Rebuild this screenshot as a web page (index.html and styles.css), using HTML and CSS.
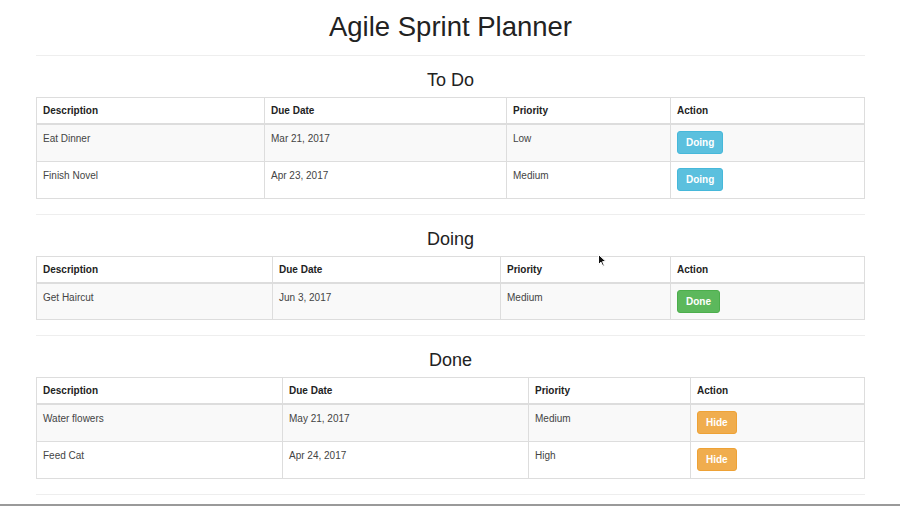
FILE: index.html
```html
<!DOCTYPE html>
<html lang="en">
<head>
<meta charset="utf-8">
<title>Agile Sprint Planner</title>
<link rel="stylesheet" href="styles.css">
</head>
<body>
<div class="page">
  <main class="container">
    <h1 class="title">Agile Sprint Planner</h1>
    <hr class="rule">

    <section class="board">
      <h3 class="board-title">To Do</h3>
      <table class="tasks">
        <colgroup><col class="todo-c1"><col class="todo-c2"><col class="todo-c3"><col></colgroup>
        <thead>
          <tr><th>Description</th><th>Due Date</th><th>Priority</th><th>Action</th></tr>
        </thead>
        <tbody>
          <tr><td>Eat Dinner</td><td>Mar 21, 2017</td><td>Low</td><td><button class="btn btn-info">Doing</button></td></tr>
          <tr><td>Finish Novel</td><td>Apr 23, 2017</td><td>Medium</td><td><button class="btn btn-info">Doing</button></td></tr>
        </tbody>
      </table>
      <hr class="rule rule-section">
    </section>

    <section class="board">
      <h3 class="board-title">Doing</h3>
      <table class="tasks">
        <colgroup><col class="doing-c1"><col class="doing-c2"><col class="doing-c3"><col></colgroup>
        <thead>
          <tr><th>Description</th><th>Due Date</th><th>Priority</th><th>Action</th></tr>
        </thead>
        <tbody>
          <tr><td>Get Haircut</td><td>Jun 3, 2017</td><td>Medium</td><td><button class="btn btn-success">Done</button></td></tr>
        </tbody>
      </table>
      <hr class="rule rule-section">
    </section>

    <section class="board">
      <h3 class="board-title">Done</h3>
      <table class="tasks">
        <colgroup><col class="done-c1"><col class="done-c2"><col class="done-c3"><col></colgroup>
        <thead>
          <tr><th>Description</th><th>Due Date</th><th>Priority</th><th>Action</th></tr>
        </thead>
        <tbody>
          <tr><td>Water flowers</td><td>May 21, 2017</td><td>Medium</td><td><button class="btn btn-warning">Hide</button></td></tr>
          <tr><td>Feed Cat</td><td>Apr 24, 2017</td><td>High</td><td><button class="btn btn-warning">Hide</button></td></tr>
        </tbody>
      </table>
      <hr class="rule rule-section">
    </section>
  </main>
  <div class="window-edge"></div>
</div>
<svg class="cursor" width="9" height="13" viewBox="0 0 9 13" aria-hidden="true">
  <path d="M0.5 0.5 L0.5 10.5 L3 8.2 L4.8 12.2 L6.3 11.5 L4.6 7.6 L8 7.6 Z" fill="#111" stroke="#fff" stroke-width="1"/>
</svg>
</body>
</html>
```
FILE: styles.css
```css
* { box-sizing: border-box; }

html, body {
  margin: 0;
  padding: 0;
  background: #fff;
}

body {
  font-family: "Liberation Sans", Arial, Helvetica, sans-serif;
  color: #333;
  font-size: 10px;
  position: relative;
  overflow: hidden;
}

.page {
  min-height: 506px;
  display: flex;
  flex-direction: column;
}

.container {
  padding: 0 35px 0 36px;
  flex: 1;
}

.title {
  margin: 10px 0 11px;
  font-size: 27.5px;
  line-height: 34px;
  font-weight: normal;
  text-align: center;
  color: #222;
}

.rule {
  margin: 0;
  border: 0;
  border-top: 1px solid #eee;
  height: 0;
}

.rule-section {
  margin-top: 15px;
}

.board-title {
  margin: 14px 0 7px;
  font-size: 18px;
  line-height: 20px;
  font-weight: normal;
  text-align: center;
  color: #222;
}

.tasks {
  width: 100%;
  border-collapse: collapse;
  table-layout: fixed;
  border: 1px solid #ddd;
}

.tasks th,
.tasks td {
  border: 1px solid #ddd;
  text-align: left;
  vertical-align: top;
  padding: 6px;
  font-size: 10px;
}

.tasks th {
  font-weight: bold;
  color: #222;
  line-height: 13px;
  padding-top: 6px;
  padding-bottom: 6px;
  border-bottom: 2px solid #ddd;
}

.tasks td {
  line-height: 14px;
  color: #444;
  height: 37px;
  padding-top: 7px;
}

.tasks tbody tr:nth-child(odd) td {
  background: #f9f9f9;
}

.todo-c1 { width: 228px; }
.todo-c2 { width: 242px; }
.todo-c3 { width: 164px; }

.doing-c1 { width: 236px; }
.doing-c2 { width: 228px; }
.doing-c3 { width: 170px; }

.done-c1 { width: 246px; }
.done-c2 { width: 246px; }
.done-c3 { width: 162px; }

.btn {
  display: inline-block;
  margin: -1px 0 0 0;
  padding: 4px 8px;
  font-family: inherit;
  font-size: 10px;
  font-weight: bold;
  line-height: 13px;
  color: #fff;
  border: 1px solid transparent;
  border-radius: 3px;
  cursor: pointer;
}

.btn-info {
  background: #5bc0de;
  border-color: #46b8da;
}

.btn-success {
  background: #5cb85c;
  border-color: #4cae4c;
}

.btn-warning {
  background: #f0ad4e;
  border-color: #eea236;
}

.window-edge {
  height: 2px;
  background: #9a9a9a;
}

.cursor {
  position: absolute;
  left: 598px;
  top: 254px;
}
```
